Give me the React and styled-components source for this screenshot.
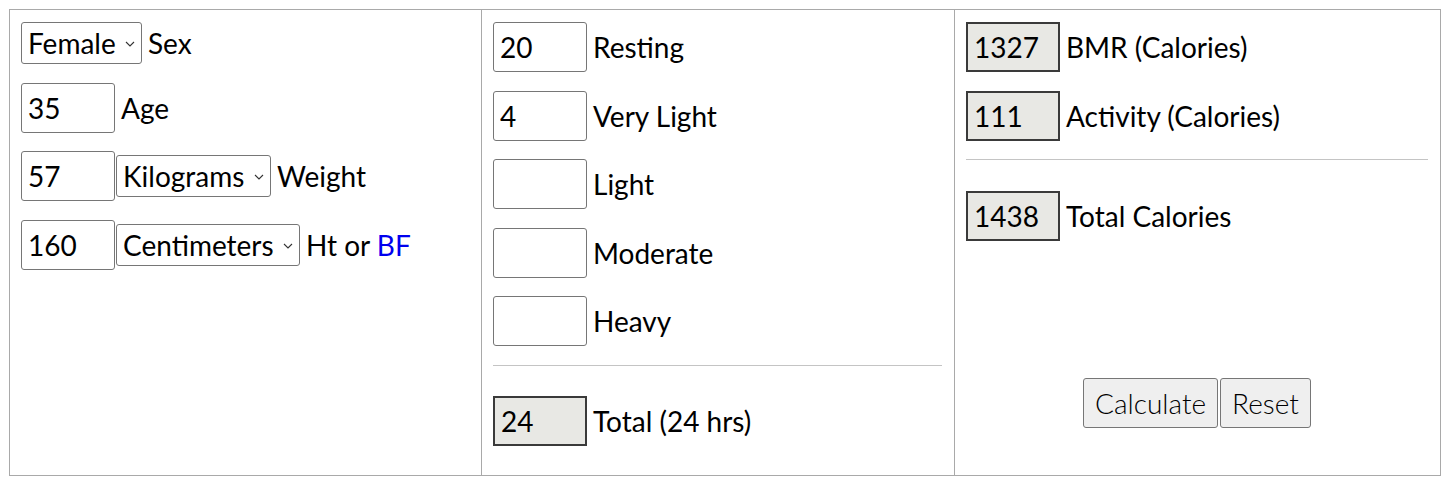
import React from "react";
import styled, { createGlobalStyle } from "styled-components";

const GlobalStyle = createGlobalStyle`
  html, body { margin: 0; padding: 0; background: #ffffff; }
  body { font-family: Lato, "Liberation Sans", sans-serif; color: #000; }
`;

const Panel = styled.div`
  display: grid;
  grid-template-columns: 471px 473px 486px;
  margin: 9px 0 0 9px;
  width: 1430px;
  border: 1px solid #a9a9a9;
`;

const Cell = styled.div`
  display: flex;
  flex-direction: column;
  gap: 18.5px;
  padding: 12px 12px 29px 11px;
  border-left: ${(p) => (p.$divider ? "1px solid #a9a9a9" : "none")};
`;

const Row = styled.div`
  display: flex;
  align-items: center;
  height: ${(p) => (p.$short ? "42px" : "50px")};
`;

const Label = styled.span`
  margin-left: 6px;
  font-size: 28px;
  line-height: 1;
  white-space: nowrap;
`;

const Link = styled.a`
  color: #0000ee;
  text-decoration: none;
`;

const NumInput = styled.input`
  box-sizing: border-box;
  width: 94px;
  height: 50px;
  margin: 0;
  padding: 0 6px;
  font-family: inherit;
  font-size: 28px;
  color: #000;
  background: ${(p) => (p.readOnly ? "#e8e8e4" : "#ffffff")};
  border: ${(p) => (p.readOnly ? "2px solid #3a3a3a" : "1px solid #767676")};
  border-radius: ${(p) => (p.readOnly ? "0" : "3px")};
  outline: none;
`;

const SelectWrap = styled.span`
  position: relative;
  display: inline-flex;
  margin-left: ${(p) => (p.$gap ? "1px" : "0")};
`;

const Select = styled.select`
  appearance: none;
  -webkit-appearance: none;
  box-sizing: border-box;
  height: 42px;
  margin: 0;
  padding: 0 25px 0 6px;
  font-family: inherit;
  font-size: 28px;
  color: #000;
  background: #fff;
  border: 1px solid #767676;
  border-radius: 3px;
  outline: none;
`;

const Chevron = styled.svg`
  position: absolute;
  right: 7px;
  top: 50%;
  width: 10px;
  height: 6px;
  margin-top: -2px;
  pointer-events: none;
`;

const Rule = styled.hr`
  margin: 0 0 12px 0;
  border: none;
  border-top: 1px solid #c4c4c4;
  height: 0;
`;

const Buttons = styled.div`
  display: flex;
  justify-content: center;
  gap: 2px;
  margin-top: auto;
  margin-bottom: 18px;
`;

const Button = styled.button`
  box-sizing: border-box;
  height: 50px;
  padding: 0 11px;
  font-family: inherit;
  font-size: 28px;
  font-weight: 300;
  color: #000;
  background: #efefef;
  border: 1px solid #767676;
  border-radius: 3px;
`;

function Dropdown({ options, value, gap }) {
  return (
    <SelectWrap $gap={gap}>
      <Select defaultValue={value}>
        {options.map((o) => (
          <option key={o}>{o}</option>
        ))}
      </Select>
      <Chevron viewBox="0 0 10 6">
        <path d="M1 1 L5 5 L9 1" fill="none" stroke="#333" strokeWidth="1.1" />
      </Chevron>
    </SelectWrap>
  );
}

export default function App() {
  return (
    <>
      <GlobalStyle />
      <Panel>
        <Cell>
          <Row $short>
            <Dropdown options={["Female", "Male"]} value="Female" />
            <Label>Sex</Label>
          </Row>
          <Row>
            <NumInput defaultValue="35" />
            <Label>Age</Label>
          </Row>
          <Row>
            <NumInput defaultValue="57" />
            <Dropdown gap options={["Kilograms", "Pounds"]} value="Kilograms" />
            <Label>Weight</Label>
          </Row>
          <Row>
            <NumInput defaultValue="160" />
            <Dropdown gap options={["Centimeters", "Inches"]} value="Centimeters" />
            <Label>
              Ht or <Link href="#">BF</Link>
            </Label>
          </Row>
        </Cell>
        <Cell $divider>
          <Row>
            <NumInput defaultValue="20" />
            <Label>Resting</Label>
          </Row>
          <Row>
            <NumInput defaultValue="4" />
            <Label>Very Light</Label>
          </Row>
          <Row>
            <NumInput defaultValue="" />
            <Label>Light</Label>
          </Row>
          <Row>
            <NumInput defaultValue="" />
            <Label>Moderate</Label>
          </Row>
          <Row>
            <NumInput defaultValue="" />
            <Label>Heavy</Label>
          </Row>
          <Rule />
          <Row>
            <NumInput readOnly value="24" />
            <Label>Total (24 hrs)</Label>
          </Row>
        </Cell>
        <Cell $divider>
          <Row>
            <NumInput readOnly value="1327" />
            <Label>BMR (Calories)</Label>
          </Row>
          <Row>
            <NumInput readOnly value="111" />
            <Label>Activity (Calories)</Label>
          </Row>
          <Rule />
          <Row>
            <NumInput readOnly value="1438" />
            <Label>Total Calories</Label>
          </Row>
          <Buttons>
            <Button type="button">Calculate</Button>
            <Button type="button">Reset</Button>
          </Buttons>
        </Cell>
      </Panel>
    </>
  );
}
